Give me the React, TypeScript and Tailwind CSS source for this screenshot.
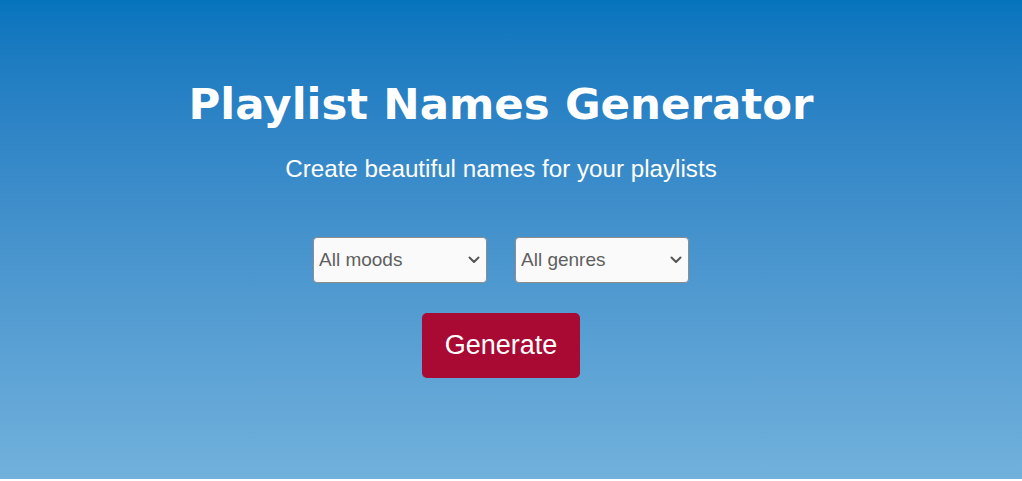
import React from 'react';

const selectClass =
  "h-[46px] w-[174px] appearance-none rounded-[4px] border border-[#8d8d8d] bg-[#fafafa] pl-[5px] pr-8 text-[19px] text-[#5f5f5f] outline-none";

const Chevron: React.FC = () => (
  <svg
    className="pointer-events-none absolute right-[7px] top-1/2 -translate-y-1/2"
    width="12"
    height="8"
    viewBox="0 0 12 8"
    fill="none"
  >
    <path d="M1.5 1.5 6 6l4.5-4.5" stroke="#555" strokeWidth="2" strokeLinecap="round" strokeLinejoin="round" />
  </svg>
);

const App: React.FC = () => {
  return (
    <div className="bg-white" style={{ fontFamily: '"Liberation Sans", Arial, sans-serif' }}>
      <div className="flex h-[479px] flex-col items-center bg-gradient-to-b from-[#0474bd] to-[#71b1dc] pr-[20px] pt-[75px]">
        <h1
          className="text-[43.5px] font-black leading-[58px] text-white"
          style={{ fontFamily: '"DejaVu Sans", sans-serif' }}
        >
          Playlist Names Generator
        </h1>
        <p className="mt-[22px] text-[24.2px] leading-[28px] text-white">Create beautiful names for your playlists</p>

        <div className="mt-[54px] flex gap-[28px]">
          <div className="relative">
            <select className={selectClass} defaultValue="all">
              <option value="all">All moods</option>
              <option value="happy">Happy</option>
              <option value="sad">Sad</option>
              <option value="chill">Chill</option>
            </select>
            <Chevron />
          </div>
          <div className="relative">
            <select className={selectClass} defaultValue="all">
              <option value="all">All genres</option>
              <option value="rock">Rock</option>
              <option value="pop">Pop</option>
              <option value="jazz">Jazz</option>
            </select>
            <Chevron />
          </div>
        </div>

        <button className="mt-[30px] h-[65px] w-[158px] rounded-[5px] bg-[#a90a33] text-[27px] text-white">
          Generate
        </button>
      </div>
    </div>
  );
};

export default App;
